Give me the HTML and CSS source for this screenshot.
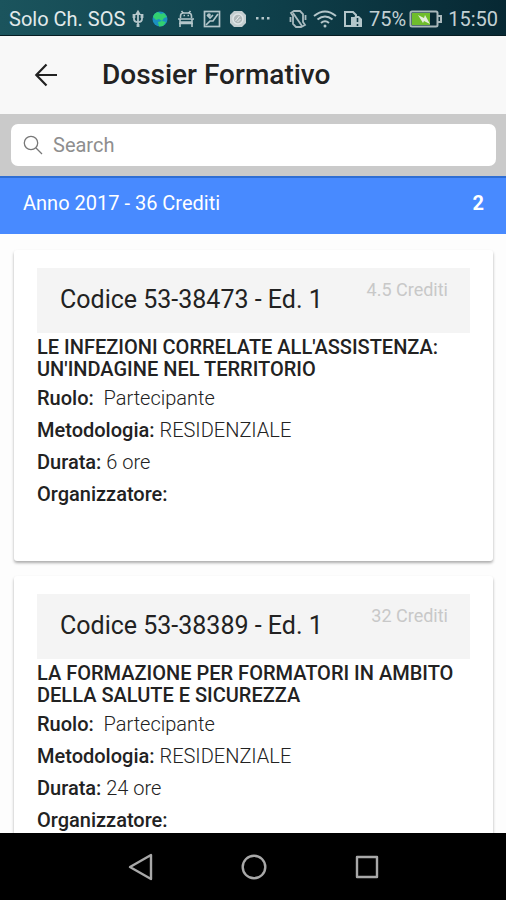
FILE: index.html
```html
<!DOCTYPE html>
<html lang="it">
<head>
    <meta charset="UTF-8">
    <meta name="viewport" content="width=device-width, initial-scale=1.0">
    <title>Dossier Formativo</title>
    <link rel="stylesheet" href="styles.css">
</head>
<body>
    <!-- Barra di stato -->
    <div class="status-bar">
        <div class="status-group">
            <span class="carrier">Solo Ch. SOS</span>
            <svg class="usb" width="14" height="20" viewBox="0 0 14 20" fill="none" stroke="#b4c6ca" stroke-width="1.8">
                <path d="M7 3v14M3 7v3q0 3 4 3M11 7v3q0 3-4 3"/>
                <path d="M5.500 5L7 2.500 8.500 5zM2.500 6h1v2h-1zM10.500 6h1v2h-1zM6.500 16h1v1h-1z" fill="#b4c6ca"/>
            </svg>
            <svg width="18" height="18" viewBox="0 0 18 18">
                <circle cx="9" cy="9" r="7.5" fill="#1c8fc0"/>
                <path d="M2 7q1-4 5-5l3 2 3-1 3 4-3 1-2 3-3-2-3 1zM7 12l4-1 4 1-3 4-4 .5z" fill="#32d070"/>
            </svg>
            <svg width="18" height="18" viewBox="0 0 18 18" fill="none" stroke="#b4c6ca" stroke-width="1.6">
                <path d="M3.500 8V6q0-3 3-3h5q3 0 3 3v2M4.500 1l1.500 2M13.500 1L12 3M1 9h16M3 9v3h12V9M2 13.500h14M3 13v4M15 13v4"/>
                <path d="M6.500 5.500h1.500M10.500 5.500H12"/>
            </svg>
            <svg width="18" height="18" viewBox="0 0 18 18" fill="none" stroke="#b4c6ca" stroke-width="1.7">
                <rect x="1.500" y="1.500" width="15" height="15"/>
                <path d="M3 15l4-4 3 0 5-7M4 5l3 3 3-3"/>
                <circle cx="6" cy="5" r="1"/>
            </svg>
            <svg width="18" height="18" viewBox="0 0 18 18">
                <path d="M5 1h8l4 4v8l-4 4H5l-4-4V5z" fill="#c4ced0"/>
                <circle cx="9" cy="9" r="5" fill="#b0b9ba" stroke="#dfe5e6" stroke-width="1.500"/>
                <path d="M6.500 11l4-5M8.500 12l3-3" stroke="#e8eced"/>
            </svg>
            <svg width="18" height="18" viewBox="0 0 18 18" fill="#b4c6ca">
                <path d="M1 7h2.500v2.500H1zM6.500 7H9v2.500H6.500zM12 7h2.500v2.500H12z"/>
            </svg>
        </div>
        <div class="status-group status-right">
            <svg width="18" height="20" viewBox="0 0 18 20" fill="none" stroke="#a9bbc0" stroke-width="1.800">
                <path d="M5 2h6l3 3v8l2 3-4 2H7l-3-3V7L2 4z"/>
                <path d="M4 4l9 13M1.500 8v5M16.500 6v5"/>
            </svg>
            <svg width="24" height="20" viewBox="0 0 24 20" fill="none" stroke="#b4c6ca" stroke-width="2">
                <path d="M1 7q11-9 22 0M4.500 10.500q7.500-6 15 0M8 14q4-3.500 8 0"/>
                <circle cx="12" cy="17" r="1.500" fill="#b4c6ca" stroke="none"/>
            </svg>
            <svg width="20" height="18" viewBox="0 0 20 18">
                <path d="M2 16V2h8l3 3v3H9v8z" fill="none" stroke="#b4c6ca" stroke-width="2"/>
                <path d="M9 8l4-2h3l3 3v8H9z" fill="#b4c6ca"/>
                <path d="M14.500 8v4M14.500 14v2" stroke="#0c3540" stroke-width="1.600"/>
            </svg>
            <span class="battery">75%
                <svg width="33" height="18" viewBox="0 0 33 18">
                    <rect x="1.500" y="1.500" width="27" height="15" rx="1.500" fill="#092a35" stroke="#aab8bc" stroke-width="2"/>
                    <path d="M29 6h3v6h-3" fill="none" stroke="#aab8bc" stroke-width="2"/>
                    <path d="M3 3h18v12H3z" fill="#6fbd2c"/>
                    <path d="M9 5l6 3 1-3 5 9-6-3-1 2z" fill="#e4eedc"/>
                </svg>
            </span>
            <span class="clock">15:50</span>
        </div>
    </div>

    <header class="toolbar">
        <button class="back-button" type="button" aria-label="Indietro">
            <svg width="24" height="24" viewBox="0 0 24 24" fill="none" stroke="#222" stroke-width="2.200">
                <path d="M23 12H2.500M12.500 1.500L2.300 12l10.200 10.500"/>
            </svg>
        </button>
        <h1>Dossier Formativo</h1>
    </header>

    <form class="search-bar">
        <label class="search-box">
            <svg width="20" height="20" viewBox="0 0 20 20" fill="none" stroke="#777" stroke-width="1.300">
                <circle cx="8" cy="8" r="6.700"/>
                <path d="M13 13l6 6"/>
            </svg>
            <input type="search" placeholder="Search" aria-label="Search">
        </label>
    </form>

    <main class="content">
        <div class="year-divider">
            <span>Anno 2017 - 36 Crediti</span>
            <strong>2</strong>
        </div>

        <div class="card-list">
            <article class="card">
                <div class="card-header">
                    <h2>Codice 53-38473 - Ed. 1</h2>
                    <span class="credits">4.5 Crediti</span>
                </div>
                <h3>LE INFEZIONI CORRELATE ALL'ASSISTENZA: UN'INDAGINE NEL TERRITORIO</h3>
                <p><strong>Ruolo:</strong>&nbsp; Partecipante</p>
                <p><strong>Metodologia:</strong> RESIDENZIALE</p>
                <p><strong>Durata:</strong> 6 ore</p>
                <p><strong>Organizzatore:</strong></p>
            </article>

            <article class="card">
                <div class="card-header">
                    <h2>Codice 53-38389 - Ed. 1</h2>
                    <span class="credits">32 Crediti</span>
                </div>
                <h3>LA FORMAZIONE PER FORMATORI IN AMBITO DELLA SALUTE E SICUREZZA</h3>
                <p><strong>Ruolo:</strong>&nbsp; Partecipante</p>
                <p><strong>Metodologia:</strong> RESIDENZIALE</p>
                <p><strong>Durata:</strong> 24 ore</p>
                <p><strong>Organizzatore:</strong></p>
            </article>
        </div>
    </main>

    <!-- Tasti di navigazione -->
    <nav class="nav-bar">
        <button type="button" aria-label="Back">
            <svg width="28" height="28" viewBox="0 0 28 28" fill="none" stroke="#a8a8a8" stroke-width="2.400" stroke-linejoin="round">
                <path d="M24 2v24L3 14z"/>
            </svg>
        </button>
        <button type="button" aria-label="Home">
            <svg width="28" height="28" viewBox="0 0 28 28" fill="none" stroke="#a8a8a8" stroke-width="2.400">
                <circle cx="14" cy="14" r="11.300"/>
            </svg>
        </button>
        <button type="button" aria-label="Recent">
            <svg width="28" height="28" viewBox="0 0 28 28" fill="none" stroke="#a8a8a8" stroke-width="2.400" stroke-linejoin="round">
                <rect x="4" y="4" width="20" height="20"/>
            </svg>
        </button>
    </nav>
</body>
</html>
```

FILE: styles.css
```css
* {
    box-sizing: border-box;
}

body {
    margin: 0;
    height: 100vh;
    display: flex;
    flex-direction: column;
    font-family: Roboto, "Liberation Sans", sans-serif;
    font-size: 20px;
    color: #222;
    background: #fdfdfd;
}

h1, h2, h3, p {
    margin: 0;
}

svg {
    display: block;
    flex: none;
}

button {
    padding: 0;
    border: 0;
    background: none;
}

/* Barra di stato */
.status-bar {
    flex: none;
    display: flex;
    justify-content: space-between;
    align-items: center;
    height: 36px;
    padding: 2px 8px 0 9px;
    border-bottom: 1px solid #061c22;
    background: linear-gradient(to right, #1b545d, #0f414c 50%, #072833);
    color: #c3d0d3;
    white-space: nowrap;
}

.status-group {
    display: flex;
    align-items: center;
    gap: 8px;
}

.status-right {
    gap: 6px;
}

.carrier {
    color: #e2eaeb;
}

.usb {
    margin: 0 -2px;
}

.battery {
    display: flex;
    align-items: center;
    gap: 3px;
}

/* Intestazione */
.toolbar {
    flex: none;
    display: flex;
    align-items: center;
    gap: 44px;
    height: 78px;
    padding: 0 34px;
    background: #f8f8f8;
}

.toolbar h1 {
    font-size: 28px;
    font-weight: 500;
    line-height: 32px;
}

/* Ricerca */
.search-bar {
    flex: none;
    margin: 0;
    padding: 10px 10px 10px 11px;
    background: #cacaca;
}

.search-box {
    display: flex;
    align-items: center;
    gap: 10px;
    height: 42px;
    padding: 0 12px;
    border-radius: 7px;
    background: #fff;
}

.search-box input {
    flex: 1;
    min-width: 0;
    padding: 0;
    border: 0;
    outline: 0;
    background: none;
    font: inherit;
    color: #222;
}

.search-box input::placeholder {
    color: #8e8e8e;
    opacity: 1;
}

/* Contenuto */
.content {
    flex: 1;
    min-height: 0;
    overflow-y: auto;
    scrollbar-width: none;
}

.year-divider {
    display: flex;
    justify-content: space-between;
    padding: 14px 22px 20px 23px;
    border-top: 2px solid #2f6ed3;
    background: #488aff;
    color: #fff;
    line-height: 22px;
}

.card-list {
    display: flex;
    flex-direction: column;
    gap: 15px;
    padding: 16px 13px 16px 14px;
}

.card {
    padding: 18px 23px 51px;
    border-radius: 3px;
    background: #fff;
    box-shadow: 0 2px 3px rgba(0, 0, 0, 0.32);
}

.card-header {
    display: flex;
    justify-content: space-between;
    height: 65px;
    padding: 10px 22px 0 23px;
    background: #f4f4f4;
}

.card-header h2 {
    font-size: 25px;
    font-weight: 400;
    line-height: 44px;
}

.credits {
    color: #c8c8c8;
    font-size: 18px;
    line-height: 24px;
}

.card h3 {
    padding: 3px 0 2px;
    font-size: 20px;
    font-weight: 500;
    line-height: 22px;
}

.card p {
    font-weight: 300;
    line-height: 32px;
}

.card p strong {
    font-weight: 500;
}

/* Navigazione */
.nav-bar {
    flex: none;
    display: flex;
    justify-content: center;
    align-items: center;
    gap: 85px;
    height: 67px;
    padding-left: 2px;
    background: #000;
}
```
